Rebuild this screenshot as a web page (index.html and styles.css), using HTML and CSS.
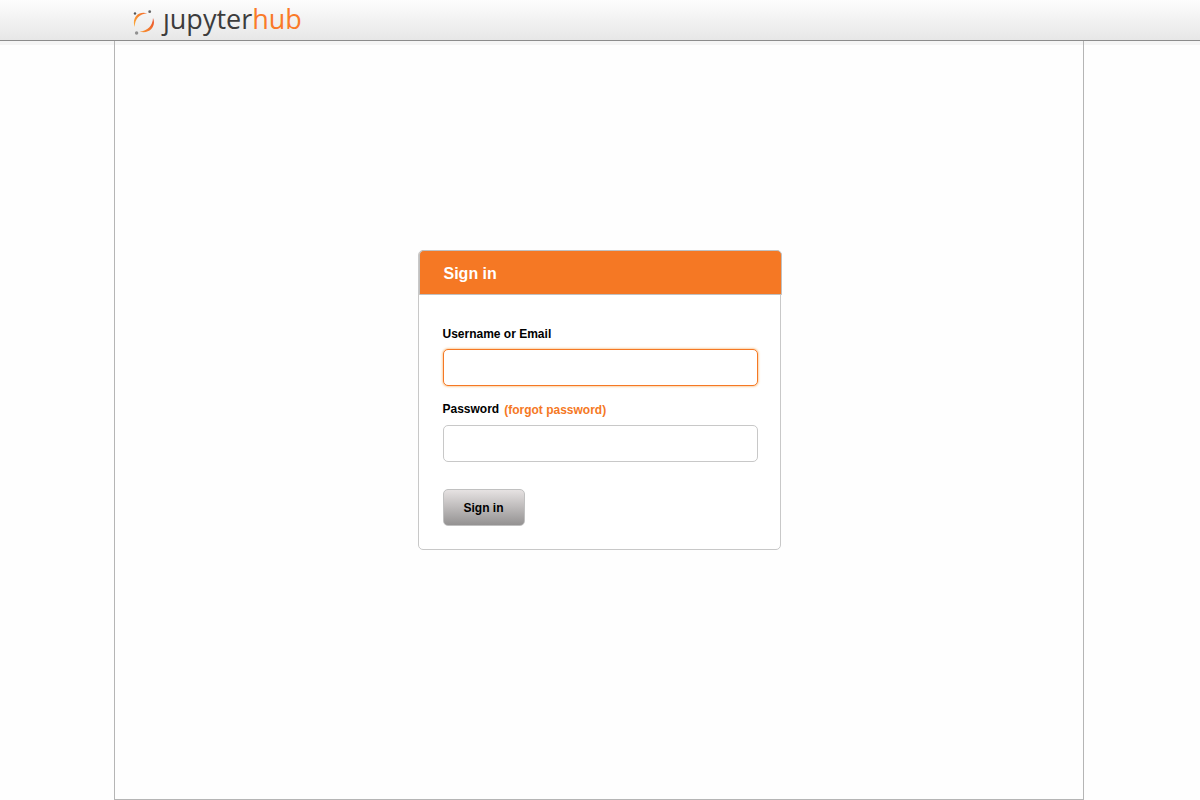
FILE: index.html
```
<!DOCTYPE html>
<html lang="en">
<head>
<meta charset="utf-8">
<title>JupyterHub</title>
<link rel="stylesheet" href="styles.css">
</head>
<body>
<header class="topbar">
  <a class="brand" href="#" aria-label="jupyterhub">
    <svg class="brand-mark" width="22" height="26" viewBox="0 0 22 26" aria-hidden="true">
      <defs>
        <linearGradient id="arc-top" x1="0" y1="1" x2="1" y2="0">
          <stop offset="0" stop-color="#fbac3a"/>
          <stop offset="1" stop-color="#f4692a"/>
        </linearGradient>
        <linearGradient id="arc-bottom" x1="0" y1="1" x2="1" y2="0">
          <stop offset="0" stop-color="#fa9a34"/>
          <stop offset="1" stop-color="#e84a26"/>
        </linearGradient>
      </defs>
      <path fill="url(#arc-top)" d="M1.700 17C-1.500 8 5 0.500 14.200 3.200C6.500 3.600 1.800 9 1.700 17Z"/>
      <path fill="url(#arc-bottom)" d="M20 8C23.600 16 16.500 24.700 6.500 21.500C14.600 21.200 19.800 15.500 20 8Z"/>
      <circle cx="2" cy="3.500" r="1.200" fill="#555"/>
      <circle cx="16.700" cy="1.700" r="1.400" fill="#666"/>
      <circle cx="3.600" cy="23" r="1.700" fill="#909090"/>
    </svg>
    <span class="wordmark">ȷupyter<span class="wordmark-hub">hub</span></span>
  </a>
</header>
<main class="page">
  <form class="card">
    <h1 class="card-title">Sign in</h1>
    <div class="card-body">
      <div class="label-row"><label for="username">Username or Email</label></div>
      <input class="field" id="username" type="text" autofocus>
      <div class="label-row"><label for="password">Password</label><a class="forgot" href="#">(forgot password)</a></div>
      <input class="field" id="password" type="password">
      <button class="submit" type="submit">Sign in</button>
    </div>
  </form>
</main>
</body>
</html>
```
FILE: styles.css
```
* { box-sizing: border-box; }

body {
  margin: 0;
  min-height: 100vh;
  display: flex;
  flex-direction: column;
  background: #fefefe;
  color: #000;
  font-family: "Liberation Sans", Arial, sans-serif;
  font-size: 12px;
}

.topbar {
  display: flex;
  justify-content: center;
  height: 41px;
  border-bottom: 1px solid #8c8c8c;
  background: linear-gradient(#fdfdfd, #e7e7e7);
  box-shadow: 0 4px 0 #f5f5f5;
}

.brand {
  display: flex;
  align-items: center;
  gap: 8px;
  width: 970px;
  padding: 5px 0 0 18px;
  text-decoration: none;
}

.wordmark {
  color: #3c3c3c;
  font: 27px/36px "Open Sans", "Noto Sans", sans-serif;
  margin-top: -8px;
}

.wordmark-hub { color: #fa7a28; }

.page {
  flex: 1;
  display: flex;
  justify-content: center;
  align-items: center;
  width: 100%;
  max-width: 970px;
  margin: 0 auto;
  padding-bottom: 41px;
  border: 1px solid #b5b5b5;
  border-top: 0;
  position: relative;
  left: -1px;
}

.card {
  width: 363px;
  border: 1px solid #c8c8c8;
  border-radius: 5px;
  background: #fff;
}

.card-title {
  margin: -1px -2px 0 0;
  padding: 2px 24px 0;
  border: 1px solid #c0c0c0;
  border-radius: 5px 5px 0 0;
  background: #f57824;
  color: #fff;
  font-size: 16px;
  line-height: 41px;
}

.card-body { padding: 30px 22px 23px 24px; }

.label-row {
  display: flex;
  gap: 5px;
  font-weight: bold;
  line-height: 18px;
}

.forgot {
  color: #f57824;
  text-decoration: none;
  padding-top: 1px;
}

.field {
  display: block;
  width: 100%;
  height: 37px;
  margin: 6px 0 14px;
  padding: 0 10px;
  border: 1px solid #c8c8c8;
  border-radius: 5px;
  background: #fff;
  font: inherit;
  caret-color: transparent;
  outline: none;
}

.field:focus {
  border-color: #f57824;
  box-shadow: 0 0 2px 1px #fbd3a8;
}

.submit {
  display: block;
  width: 82px;
  height: 37px;
  margin-top: 27px;
  padding: 1px 0 0;
  border: 1px solid #c0c0c0;
  border-radius: 5px;
  background: linear-gradient(#e6e2e2, #949292);
  color: #000;
  font: bold 12px "Liberation Sans", Arial, sans-serif;
}
```
